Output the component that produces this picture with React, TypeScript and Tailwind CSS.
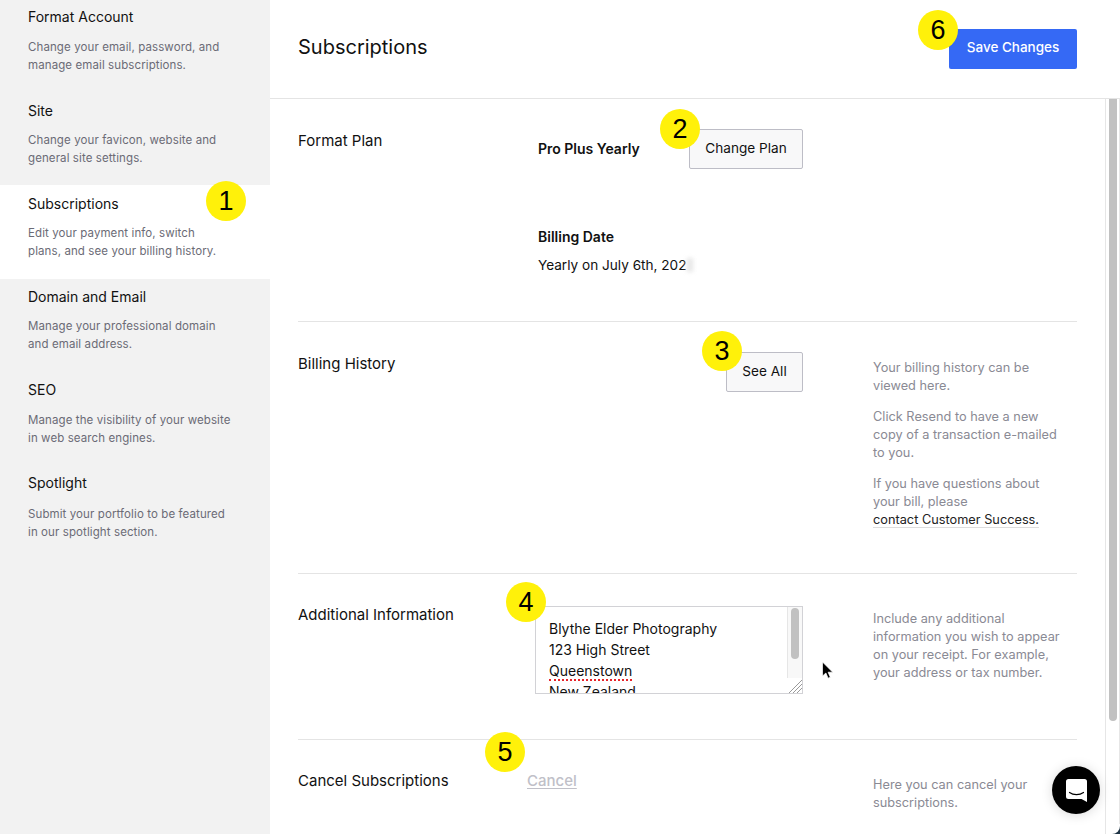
import React from 'react';

const navItems = [
  { title: 'Format Account', desc: ['Change your email, password, and', 'manage email subscriptions.'], box: 'h-[93px] pt-[8px]', gap: 'mt-[12px]' },
  { title: 'Site', desc: ['Change your favicon, website and', 'general site settings.'], box: 'h-[93px] pt-[9px]', gap: 'mt-[11px]' },
  { title: 'Subscriptions', desc: ['Edit your payment info, switch', 'plans, and see your billing history.'], box: 'h-[94px] pt-[9px] bg-white', gap: 'mt-[11px]' },
  { title: 'Domain and Email', desc: ['Manage your professional domain', 'and email address.'], box: 'h-[93px] pt-[8px]', gap: 'mt-[11px]' },
  { title: 'SEO', desc: ['Manage the visibility of your website', 'in web search engines.'], box: 'h-[93px] pt-[8px]', gap: 'mt-[12px]' },
  { title: 'Spotlight', desc: ['Submit your portfolio to be featured', 'in our spotlight section.'], box: 'h-[93px] pt-[8px]', gap: 'mt-[13px]' },
];

const Badge = ({ n, className }: { n: number; className: string }) => (
  <div className={`absolute w-10 h-10 rounded-full bg-[#fff10a] flex items-center justify-center text-[27px] text-black font-['Liberation_Sans',sans-serif] ${className}`}>
    {n}
  </div>
);

const App: React.FC = () => {
  return (
    <div className="relative w-[1120px] h-[834px] overflow-hidden bg-white flex font-['Inter',sans-serif] text-[#111] antialiased">
      <aside className="w-[270px] shrink-0 bg-[#f2f2f2] -mt-px">
        {navItems.map((item) => (
          <div key={item.title} className={`pl-7 ${item.box}`}>
            <div className="text-[14px] leading-[18px] pt-px">{item.title}</div>
            <div className={`${item.gap} text-[11.5px] tracking-[0.1px] leading-[18px] text-[#6b6b76]`}>
              {item.desc.map((line) => (
                <div key={line}>{line}</div>
              ))}
            </div>
          </div>
        ))}
      </aside>

      <main className="flex-1 flex flex-col min-w-0">
        <header className="h-[99px] shrink-0 border-b border-[#e4e4e4] pl-7 pr-[43px] flex items-center justify-between">
          <h1 className="text-[20px] font-normal -mt-[4px]">Subscriptions</h1>
          <button className="w-[128px] h-10 rounded-[2px] bg-[#3569f5] text-white text-[13.5px] font-medium pb-[3px]">Save Changes</button>
        </header>

        <div className="flex-1 flex min-h-0">
          <div className="flex-1 pl-7 pr-[28px] min-w-0">
            <section className="h-[223px] border-b border-[#e4e4e4] grid grid-cols-[240px_265px_1fr] gap-x-0 pt-[30px]">
              <div className="text-[15px] leading-[24px]">Format Plan</div>
              <div>
                <div className="flex items-center justify-between h-10">
                  <span className="text-[14px] font-semibold -mt-[2px]">Pro Plus Yearly</span>
                  <button className="w-[114px] h-10 border border-[#bdbdc6] rounded-[2px] bg-[#f8f8f9] text-[13.6px] pb-[2px]">Change Plan</button>
                </div>
                <div className="mt-[58px] text-[14px] font-semibold leading-[20px]">Billing Date</div>
                <div className="relative mt-2 text-[13.6px] leading-[20px]">
                  Yearly on July 6th, 202
                  <span className="absolute left-[149px] top-[3px] h-[14px] w-[6px] bg-[#e6e6e6] blur-[2px]"></span>
                </div>
              </div>
            </section>

            <section className="h-[252px] border-b border-[#e4e4e4] grid grid-cols-[240px_265px_1fr] pt-[30px]">
              <div className="text-[15px] leading-[24px]">Billing History</div>
              <div className="flex justify-end items-start">
                <button className="w-[77px] h-10 border border-[#bdbdc6] rounded-[2px] bg-[#f8f8f9] text-[13.6px] pb-[2px]">See All</button>
              </div>
              <div className="pl-[70px] pt-[7px] text-[12.75px] leading-[18px] text-[#8a8a94]">
                <p>Your billing history can be<br />viewed here.</p>
                <p className="mt-[12.5px]">Click Resend to have a new<br />copy of a transaction e-mailed<br />to you.</p>
                <p className="mt-[13.5px]">If you have questions about<br />your bill, please<br /><span className="text-[#222] border-b border-[#ddd]">contact Customer Success.</span></p>
              </div>
            </section>

            <section className="h-[166px] border-b border-[#e4e4e4] grid grid-cols-[240px_265px_1fr] pt-[32px]">
              <div className="text-[15px] leading-[18px]">Additional Information</div>
              <div className="relative -ml-[3px] h-[88px] border border-[#d2d2d6] overflow-hidden pl-[13px] pt-[11px] text-[14px] leading-[21px]">
                <div>Blythe Elder Photography</div>
                <div>123 High Street</div>
                <div><span className="border-b-2 border-dotted border-[#e8242a]">Queenstown</span></div>
                <div>New Zealand</div>
                <div className="absolute right-0 top-0 bottom-[15px] w-[15px] bg-[#f8f8f8] border-l border-[#e6e6e6]">
                  <div className="mx-auto mt-px w-2 h-[51px] rounded-full bg-[#c1c1c1]"></div>
                </div>
                <div className="absolute right-0 bottom-0 w-[15px] h-[15px] bg-white"></div>
                <svg className="absolute right-0 bottom-0" width="14" height="14" viewBox="0 0 14 14" stroke="#9a9a9a" strokeWidth="1">
                  <path d="M1 14 14 1M5 14 14 5M9 14 14 9" />
                </svg>
              </div>
              <div className="pl-[70px] pt-[4px] text-[12.75px] leading-[18px] text-[#8a8a94]">
                Include any additional<br />information you wish to appear<br />on your receipt. For example,<br />your address or tax number.
              </div>
            </section>

            <section className="grid grid-cols-[229px_276px_1fr] pt-[31px]">
              <div className="text-[15px] leading-[20px]">Cancel Subscriptions</div>
              <div className="text-[15px] leading-[20px] text-[#c0c0c8] font-medium underline underline-offset-2">Cancel</div>
              <div className="pl-[70px] pt-[5px] text-[12.75px] leading-[18px] text-[#8a8a94]">
                Here you can cancel your<br />subscriptions.
              </div>
            </section>
          </div>

          <div className="w-[15px] shrink-0 border-x border-[#e6e6e6] bg-white pl-[3px]">
            <div className="w-2 h-[622px] rounded-b-full bg-[#c1c1c1]"></div>
          </div>
        </div>
      </main>

      <Badge n={1} className="left-[206px] top-[181px]" />
      <Badge n={2} className="left-[660px] top-[109px]" />
      <Badge n={3} className="left-[702px] top-[331px]" />
      <Badge n={4} className="left-[506px] top-[582px]" />
      <Badge n={5} className="left-[485px] top-[732px]" />
      <Badge n={6} className="left-[918px] top-[10px]" />

      <svg className="absolute left-[821px] top-[661px]" width="14" height="20" viewBox="0 0 14 20">
        <path d="M1.5 1v14l3.4-3 2.2 5.2 2.2-1-2.2-5h4.6z" fill="#000" stroke="#fff" strokeWidth="0.7" />
      </svg>

      <div className="absolute left-[1052px] top-[766px] w-12 h-12 rounded-full bg-black shadow-[0_1px_12px_rgba(0,0,0,0.15)] flex items-center justify-center">
        <svg width="21" height="23" viewBox="0 0 21 23">
          <path d="M2.5 0h16A2.5 2.5 0 0 1 21 2.5V23l-5.5-3h-13A2.5 2.5 0 0 1 0 17.500V2.500A2.500 2.500 0 0 1 2.500 0z" fill="#fff" />
          <path d="M3.500 13.500c4 2.800 10 2.800 14 0" fill="none" stroke="#000" strokeWidth="1.200" strokeLinecap="round" />
        </svg>
      </div>

      <div className="absolute right-0 bottom-0 w-[10px] h-[10px] bg-[#1f3444]">
        <div className="w-full h-full bg-white rounded-br-[8px]"></div>
      </div>
    </div>
  );
};

export default App;
